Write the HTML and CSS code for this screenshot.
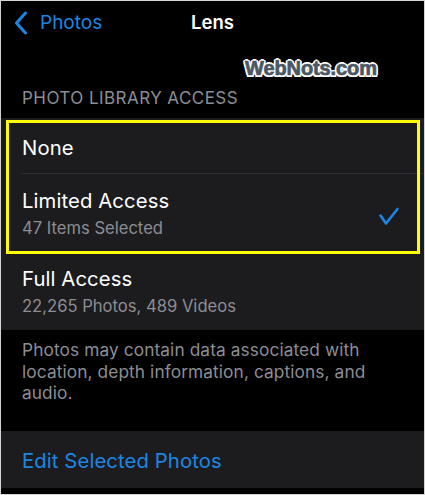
FILE: index.html
```html
<!DOCTYPE html>
<html lang="en">
<head>
<meta charset="utf-8">
<title>Lens</title>
<link rel="stylesheet" href="styles.css">
</head>
<body>
<div class="frame">
  <div class="nav">
    <div class="back">
      <svg class="chev" width="14" height="24" viewBox="0 0 14 24"><polyline points="11.5,2 2.5,12 11.5,22" fill="none" stroke="#1c86e4" stroke-width="3" stroke-linecap="round" stroke-linejoin="round"/></svg>
      <span class="back-label">Photos</span>
    </div>
    <div class="title">Lens</div>
  </div>
  <div class="watermark">WebNots.com</div>
  <div class="section-header">PHOTO LIBRARY ACCESS</div>
  <div class="group">
    <div class="highlight-wrap">
      <div class="row row-single sep">
        <div class="row-title">None</div>
      </div>
      <div class="row row-double">
        <div class="row-text">
          <div class="row-title">Limited Access</div>
          <div class="row-sub">47 Items Selected</div>
        </div>
        <svg class="check" width="22" height="20" viewBox="0 0 22 20"><polyline points="2.5,8.5 8,16.5 19.5,2" fill="none" stroke="#1c86e4" stroke-width="2.6" stroke-linecap="round" stroke-linejoin="round"/></svg>
      </div>
      <div class="highlight"></div>
    </div>
    <div class="row row-double row-full">
      <div class="row-text">
        <div class="row-title">Full Access</div>
        <div class="row-sub">22,265 Photos, 489 Videos</div>
      </div>
    </div>
  </div>
  <div class="footer">Photos may contain data associated with location, depth information, captions, and audio.</div>
  <div class="group">
    <div class="row row-edit">
      <div class="row-title link">Edit Selected Photos</div>
    </div>
  </div>
</div>
</body>
</html>
```
FILE: styles.css
```css
* { box-sizing: border-box; }
html, body { margin: 0; padding: 0; background: #000; }
body { font-family: Inter, "Noto Sans", "Liberation Sans", sans-serif; }

.frame {
  position: relative;
  width: 425px;
  height: 495px;
  border: 1px solid #d4d4d4;
  background: #000;
  overflow: hidden;
  color: #fff;
}

.nav {
  position: relative;
  height: 43px;
  display: flex;
  align-items: center;
}
.back {
  display: flex;
  align-items: center;
  gap: 12px;
  padding-left: 13px;
  color: #1c86e4;
}
.chev { display: block; }
.back-label { font-size: 19px; line-height: 24px; }
.title {
  position: absolute;
  left: 0; right: 0; top: 0;
  height: 43px;
  line-height: 43px;
  text-align: center;
  font-size: 18.5px;
  font-weight: 600;
}

.watermark {
  position: absolute;
  left: 244px;
  top: 54px;
  font-family: "Liberation Sans", Arial, sans-serif;
  font-weight: 700;
  font-size: 20px;
  line-height: 26px;
  letter-spacing: -0.1px;
  color: #4b5762;
  -webkit-text-stroke: 0.7px #4b5762;
  text-shadow:
    2px 0 0 #fff, -2px 0 0 #fff, 0 2px 0 #fff, 0 -2px 0 #fff,
    1.5px 1.5px 0 #fff, -1.5px 1.5px 0 #fff, 1.5px -1.5px 0 #fff, -1.5px -1.5px 0 #fff,
    0 0 3px #888;
}

.section-header {
  margin-top: 44px;
  padding-left: 21px;
  font-size: 17px;
  line-height: 20px;
  color: #8d8d93;
  letter-spacing: 0.45px;
}

.group {
  background: #1c1c1e;
}
.section-header + .group { margin-top: 10px; }

.highlight-wrap { position: relative; }
.highlight {
  position: absolute;
  left: 5px;
  right: 4px;
  top: 2px;
  bottom: -1px;
  border: 3.5px solid #ffff00;
  pointer-events: none;
}

.row {
  position: relative;
  display: flex;
  align-items: center;
  padding-left: 21px;
  padding-right: 24px;
}
.row.sep::after {
  content: "";
  position: absolute;
  left: 20px;
  right: 0;
  bottom: 0;
  height: 1px;
  background: #2f2f31;
}
.row-single { height: 56px; padding-top: 3px; }
.row-double { height: 79px; justify-content: space-between; }
.row-full { height: 77px; }
.row-text { display: flex; flex-direction: column; gap: 5px; }
.row-title { font-size: 20.3px; line-height: 24px; color: #fff; letter-spacing: 0.1px; }
.row-sub { font-size: 16.6px; line-height: 20px; color: #8d8d93; letter-spacing: 0; }
.check { display: block; margin-top: 6px; margin-right: 0; }

.footer {
  height: 101px;
  padding: 9px 40px 0 21px;
  font-size: 17.3px;
  line-height: 21.5px;
  color: #8d8d93;
  letter-spacing: 0.1px;
}

.row-edit { height: 57px; padding-top: 2px; }
.link { color: #1c86e4; }
```
